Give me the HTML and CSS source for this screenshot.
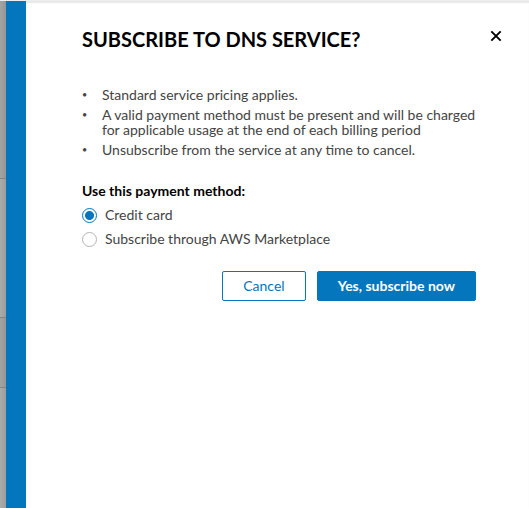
FILE: index.html
```html
<!DOCTYPE html>
<html lang="en">
<head>
<meta charset="utf-8">
<meta name="viewport" content="width=device-width, initial-scale=1">
<title>Subscribe to DNS service</title>
<link rel="stylesheet" href="styles.css">
</head>
<body>
<div class="page">
  <div class="backdrop" aria-hidden="true">
    <div class="backdrop-row"></div>
    <div class="backdrop-row light"></div>
    <div class="backdrop-row"></div>
    <div class="backdrop-row light"></div>
  </div>
  <main class="panel">
    <header class="panel-header">
      <h1>SUBSCRIBE TO DNS SERVICE?</h1>
      <button class="close" type="button" aria-label="Close">
        <svg viewBox="0 0 12 12" width="12" height="12"><path d="M1.3 1.3 10.7 10.7M10.7 1.3 1.3 10.7" fill="none" stroke="#000" stroke-width="1.9"/></svg>
      </button>
    </header>
    <form class="panel-body">
      <ul class="terms">
        <li>Standard service pricing applies.</li>
        <li>A valid payment method must be present and will be charged for applicable usage at the end of each billing period</li>
        <li>Unsubscribe from the service at any time to cancel.</li>
      </ul>
      <fieldset class="methods">
        <legend>Use this payment method:</legend>
        <label class="option"><input type="radio" name="method" checked>Credit card</label>
        <label class="option"><input type="radio" name="method">Subscribe through AWS Marketplace</label>
      </fieldset>
      <div class="actions">
        <button class="btn btn-outline" type="button">Cancel</button>
        <button class="btn btn-primary" type="button">Yes, subscribe now</button>
      </div>
    </form>
  </main>
</div>
</body>
</html>
```
FILE: styles.css
```css
* { box-sizing: border-box; }

body {
  margin: 0;
  background: #fff;
  color: #444;
  font: 14px/16px Lato, "Liberation Sans", sans-serif;
}

.page {
  display: grid;
  grid-template-columns: 6px 1fr;
  min-height: 100vh;
  border-top: 1px solid #eee;
}

.backdrop {
  display: grid;
  grid-template-rows: 178px 139px 70px 1fr;
  background: linear-gradient(90deg, #a4a4a4, #969696);
}

.backdrop-row { border-bottom: 1px solid #858585; }
.backdrop-row.light { background: linear-gradient(90deg, #acacac, #9c9c9c); }
.backdrop-row:last-child { border-bottom: 0; }

.panel {
  border-left: 20px solid #0376bd;
  padding: 26px 27px 24px 56px;
  background: #fff;
  box-shadow: inset 0 2px 1px #e8e8e8;
}

.panel-header {
  display: flex;
  align-items: flex-start;
  justify-content: space-between;
}

h1 {
  margin: 0;
  color: #000;
  font-size: 20px;
  line-height: 24px;
  font-weight: 700;
}

.close {
  display: flex;
  margin-top: 3px;
  padding: 0;
  border: 0;
  background: none;
  cursor: pointer;
}

.panel-body { padding: 36px 20px 0 0; }

.terms {
  display: grid;
  gap: 5px;
  margin: 0;
  padding: 0;
  line-height: 15px;
  list-style: none;
}

.terms li {
  display: grid;
  grid-template-columns: 20px 1fr;
}

.terms li::before { content: "•"; font-size: 9px; }

.methods {
  display: grid;
  gap: 8px;
  margin: 26px 0 0;
  padding: 0;
  border: 0;
}

.methods legend {
  margin-bottom: 8px;
  padding: 0;
  color: #000;
  font-weight: 700;
}

.option {
  display: flex;
  align-items: center;
  gap: 8px;
}

.option input {
  appearance: none;
  width: 15px;
  height: 15px;
  margin: 0;
  border: 1px solid #b4b4b4;
  border-radius: 50%;
}

.option input:checked {
  border-color: #0376bd;
  background: radial-gradient(circle, #0376bd 4px, #fff 5px);
}

.actions {
  display: flex;
  justify-content: flex-end;
  gap: 11px;
  margin: 24px 6px 0 0;
}

.btn {
  height: 30px;
  padding: 0 20px;
  border: 1px solid #0376bd;
  border-radius: 2px;
  font: inherit;
  cursor: pointer;
}

.btn-outline { background: #fff; color: #0376bd; }
.btn-primary { background: #0376bd; color: #fff; font-weight: 700; }
```
